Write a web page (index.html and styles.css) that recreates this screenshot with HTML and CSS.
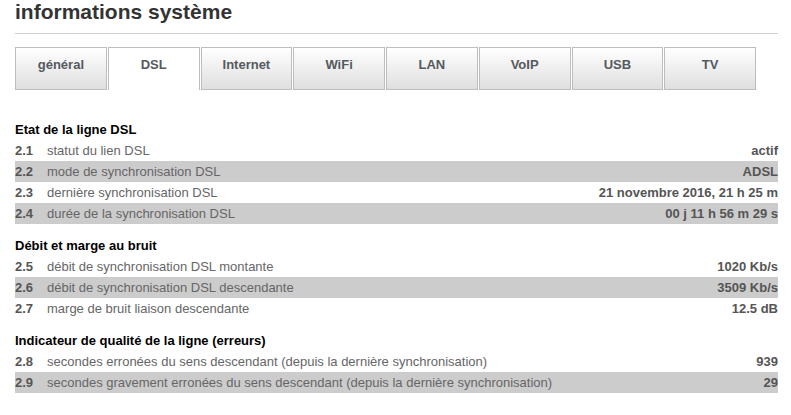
FILE: index.html
```html
<!DOCTYPE html>
<html lang="fr">
<head>
<meta charset="utf-8">
<title>informations système</title>
<link rel="stylesheet" href="styles.css">
</head>
<body>
<div class="page">
  <h1 class="title">informations système</h1>
  <div class="rule"></div>
  <div class="tabs">
    <div class="tab">général</div>
    <div class="tab active">DSL</div>
    <div class="tab">Internet</div>
    <div class="tab">WiFi</div>
    <div class="tab">LAN</div>
    <div class="tab">VoIP</div>
    <div class="tab">USB</div>
    <div class="tab">TV</div>
  </div>

  <div class="section first">
    <div class="heading">Etat de la ligne DSL</div>
    <div class="row"><span class="num">2.1</span><span class="label">statut du lien DSL</span><span class="value">actif</span></div>
    <div class="row alt"><span class="num">2.2</span><span class="label">mode de synchronisation DSL</span><span class="value">ADSL</span></div>
    <div class="row"><span class="num">2.3</span><span class="label">dernière synchronisation DSL</span><span class="value">21 novembre 2016, 21 h 25 m</span></div>
    <div class="row alt"><span class="num">2.4</span><span class="label">durée de la synchronisation DSL</span><span class="value">00 j 11 h 56 m 29 s</span></div>
  </div>

  <div class="section">
    <div class="heading">Débit et marge au bruit</div>
    <div class="row"><span class="num">2.5</span><span class="label">débit de synchronisation DSL montante</span><span class="value">1020 Kb/s</span></div>
    <div class="row alt"><span class="num">2.6</span><span class="label">débit de synchronisation DSL descendante</span><span class="value">3509 Kb/s</span></div>
    <div class="row"><span class="num">2.7</span><span class="label">marge de bruit liaison descendante</span><span class="value">12.5 dB</span></div>
  </div>

  <div class="section">
    <div class="heading">Indicateur de qualité de la ligne (erreurs)</div>
    <div class="row"><span class="num">2.8</span><span class="label">secondes erronées du sens descendant (depuis la dernière synchronisation)</span><span class="value">939</span></div>
    <div class="row alt"><span class="num">2.9</span><span class="label">secondes gravement erronées du sens descendant (depuis la dernière synchronisation)</span><span class="value">29</span></div>
  </div>
</div>
</body>
</html>
```

FILE: styles.css
```css
html, body {
  margin: 0;
  padding: 0;
  background: #ffffff;
}

.page {
  width: 763px;
  padding-left: 15px;
  font-family: "Liberation Sans", Arial, sans-serif;
  font-size: 13px;
}

.title {
  margin: 0;
  font-size: 21px;
  line-height: 24px;
  font-weight: bold;
  color: #333333;
}

.rule {
  margin-top: 9px;
  height: 1px;
  background: #d0d0d0;
}

.tabs {
  display: flex;
  gap: 1px;
  width: 741px;
  margin-top: 13px;
}

.tab {
  flex: 1;
  box-sizing: border-box;
  height: 43px;
  padding-top: 9px;
  line-height: 16px;
  text-align: center;
  font-weight: bold;
  color: #555a60;
  border: 1px solid #bdbdbd;
  background: linear-gradient(to bottom, #ffffff 0%, #f2f2f2 40%, #dfdfdf 100%);
}

.tab.active {
  background: #ffffff;
  border-bottom: none;
}

.section {
  margin-top: 11px;
}

.section.first {
  margin-top: 29px;
}

.heading {
  line-height: 21px;
  font-weight: bold;
  color: #000000;
}

.row {
  display: flex;
  height: 21px;
  line-height: 21px;
  color: #666666;
}

.row.alt {
  background: #cccccc;
}

.num {
  width: 32px;
  flex: none;
  font-weight: bold;
  color: #555555;
}

.label {
  flex: 1;
  white-space: nowrap;
}

.value {
  font-weight: bold;
  color: #555555;
  text-align: right;
  white-space: nowrap;
}
```
